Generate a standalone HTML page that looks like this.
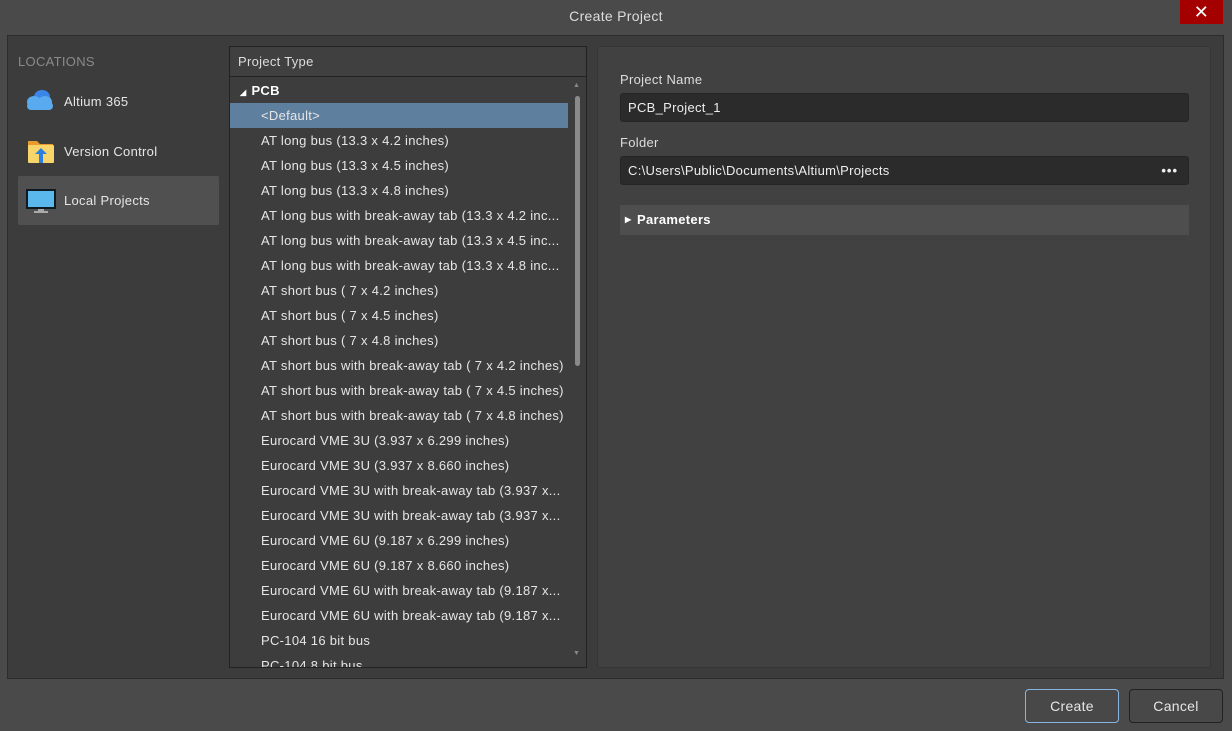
<!DOCTYPE html>
<html><head><meta charset="utf-8"><style>
*{margin:0;padding:0;box-sizing:border-box}
body{width:1232px;height:731px;background:#4a4a4a;font-family:"Liberation Sans",sans-serif;font-size:13px;color:#e6e6e6;position:relative;overflow:hidden;letter-spacing:0.3px}
.abs{position:absolute}
.title{left:0;top:0;width:1232px;height:32px;text-align:center;line-height:32px;font-size:14px;color:#ddd}
.close{left:1180px;top:0;width:43px;height:24px;background:#a50000;color:#fff;text-align:center;line-height:24px;font-size:18px}
.main{left:7px;top:35px;width:1217px;height:644px;background:#3c3c3c;border:1px solid #2c2c2c}
.loc{left:18px;top:54px;color:#8a8a8a;font-size:13px}
.item{left:18px;width:201px;height:49px;line-height:49px;padding-left:46px;border-radius:2px}
.sel{background:#505050}
.list{left:229px;top:46px;width:358px;height:622px;background:#3d3d3d;border:1px solid #222;overflow:hidden}
.hdr{height:30px;line-height:30px;padding-left:8px;border-bottom:1px solid #222;background:#404040;color:#ddd}
.row{height:25px;line-height:25px;padding-left:31px;white-space:nowrap}
.rsel{background:#5f7f9e;margin-right:18px}
.sb{left:575px;top:96px;width:5px;height:270px;background:#8a8a8a;border-radius:3px}
.right{left:597px;top:46px;width:614px;height:622px;background:#414141;border:1px solid #353535;border-radius:3px}
.lbl{left:620px;color:#ddd}
.inp{left:620px;width:569px;height:29px;background:#2b2b2b;border:1px solid #252525;border-radius:3px;line-height:27px;padding-left:7px;color:#eee}
.param{left:620px;top:205px;width:569px;height:30px;background:#4e4e4e;line-height:30px;padding-left:17px;font-weight:bold;color:#fff}
.btn{top:689px;width:94px;height:34px;border-radius:4px;text-align:center;line-height:32px;font-size:14px;background:#484848}
</style></head><body>
<div class="abs title">Create Project</div>
<div class="abs close">✕</div>
<div class="abs main"></div>
<div class="abs loc">LOCATIONS</div>
<div class="abs item" style="top:77px">Altium 365</div>
<div class="abs item" style="top:127px">Version Control</div>
<div class="abs item sel" style="top:176px">Local Projects</div>
<svg class="abs" style="left:25px;top:88px" width="30" height="26"><ellipse cx="17" cy="9" rx="8" ry="7" fill="#3a86e8"/><ellipse cx="9" cy="14" rx="7" ry="6" fill="#5aaaf0"/><ellipse cx="20" cy="14" rx="7" ry="6" fill="#5aaaf0"/><rect x="2" y="14" width="26" height="8" rx="4" fill="#5aaaf0"/></svg>
<svg class="abs" style="left:27px;top:139px" width="28" height="26"><path d="M1 2h9l3 3h13v5H1z" fill="#e89a2c"/><rect x="1" y="6" width="26" height="18" rx="1" fill="#f7d56a"/><path d="M14 9l-6 6h4v9h4v-9h4z" fill="#2a7fe0"/></svg>
<svg class="abs" style="left:26px;top:188px" width="30" height="26"><rect x="0" y="1" width="30" height="20" fill="#0e1a22"/><rect x="2" y="3" width="26" height="16" fill="#5bb8ec"/><rect x="12" y="21" width="6" height="2" fill="#aaa"/><rect x="8" y="23" width="14" height="2" fill="#aaa"/></svg>
<div class="abs list">
<div class="hdr">Project Type</div>
<div class="row" style="padding-left:10px;font-weight:bold;color:#fff;height:26px;line-height:28px"><span style="font-size:8px;margin-right:5px">◢</span>PCB</div>
<div class="row rsel">&lt;Default&gt;</div>
<div class="row">AT long bus (13.3 x 4.2 inches)</div>
<div class="row">AT long bus (13.3 x 4.5 inches)</div>
<div class="row">AT long bus (13.3 x 4.8 inches)</div>
<div class="row">AT long bus with break-away tab (13.3 x 4.2 inc...</div>
<div class="row">AT long bus with break-away tab (13.3 x 4.5 inc...</div>
<div class="row">AT long bus with break-away tab (13.3 x 4.8 inc...</div>
<div class="row">AT short bus ( 7 x 4.2 inches)</div>
<div class="row">AT short bus ( 7 x 4.5 inches)</div>
<div class="row">AT short bus ( 7 x 4.8 inches)</div>
<div class="row">AT short bus with break-away tab ( 7 x 4.2 inches)</div>
<div class="row">AT short bus with break-away tab ( 7 x 4.5 inches)</div>
<div class="row">AT short bus with break-away tab ( 7 x 4.8 inches)</div>
<div class="row">Eurocard VME 3U (3.937 x 6.299 inches)</div>
<div class="row">Eurocard VME 3U (3.937 x 8.660 inches)</div>
<div class="row">Eurocard VME 3U with break-away tab (3.937 x...</div>
<div class="row">Eurocard VME 3U with break-away tab (3.937 x...</div>
<div class="row">Eurocard VME 6U (9.187 x 6.299 inches)</div>
<div class="row">Eurocard VME 6U (9.187 x 8.660 inches)</div>
<div class="row">Eurocard VME 6U with break-away tab (9.187 x...</div>
<div class="row">Eurocard VME 6U with break-away tab (9.187 x...</div>
<div class="row">PC-104 16 bit bus</div>
<div class="row">PC-104 8 bit bus</div>
</div>
<div class="abs sb"></div>
<div class="abs" style="left:573px;top:82px;font-size:7px;color:#888">▲</div>
<div class="abs" style="left:573px;top:650px;font-size:7px;color:#888">▼</div>
<div class="abs right"></div>
<div class="abs lbl" style="top:72px">Project Name</div>
<div class="abs inp" style="top:93px">PCB_Project_1</div>
<div class="abs lbl" style="top:135px">Folder</div>
<div class="abs inp" style="top:156px">C:\Users\Public\Documents\Altium\Projects<span style="position:absolute;right:10px;font-weight:bold;letter-spacing:1px">•••</span></div>
<div class="abs param"><span style="position:absolute;left:5px;font-size:8px">▶</span>Parameters</div>
<div class="abs btn" style="left:1025px;border:1px solid #8ab4e0">Create</div>
<div class="abs btn" style="left:1129px;border:1px solid #222">Cancel</div>
</body></html>
